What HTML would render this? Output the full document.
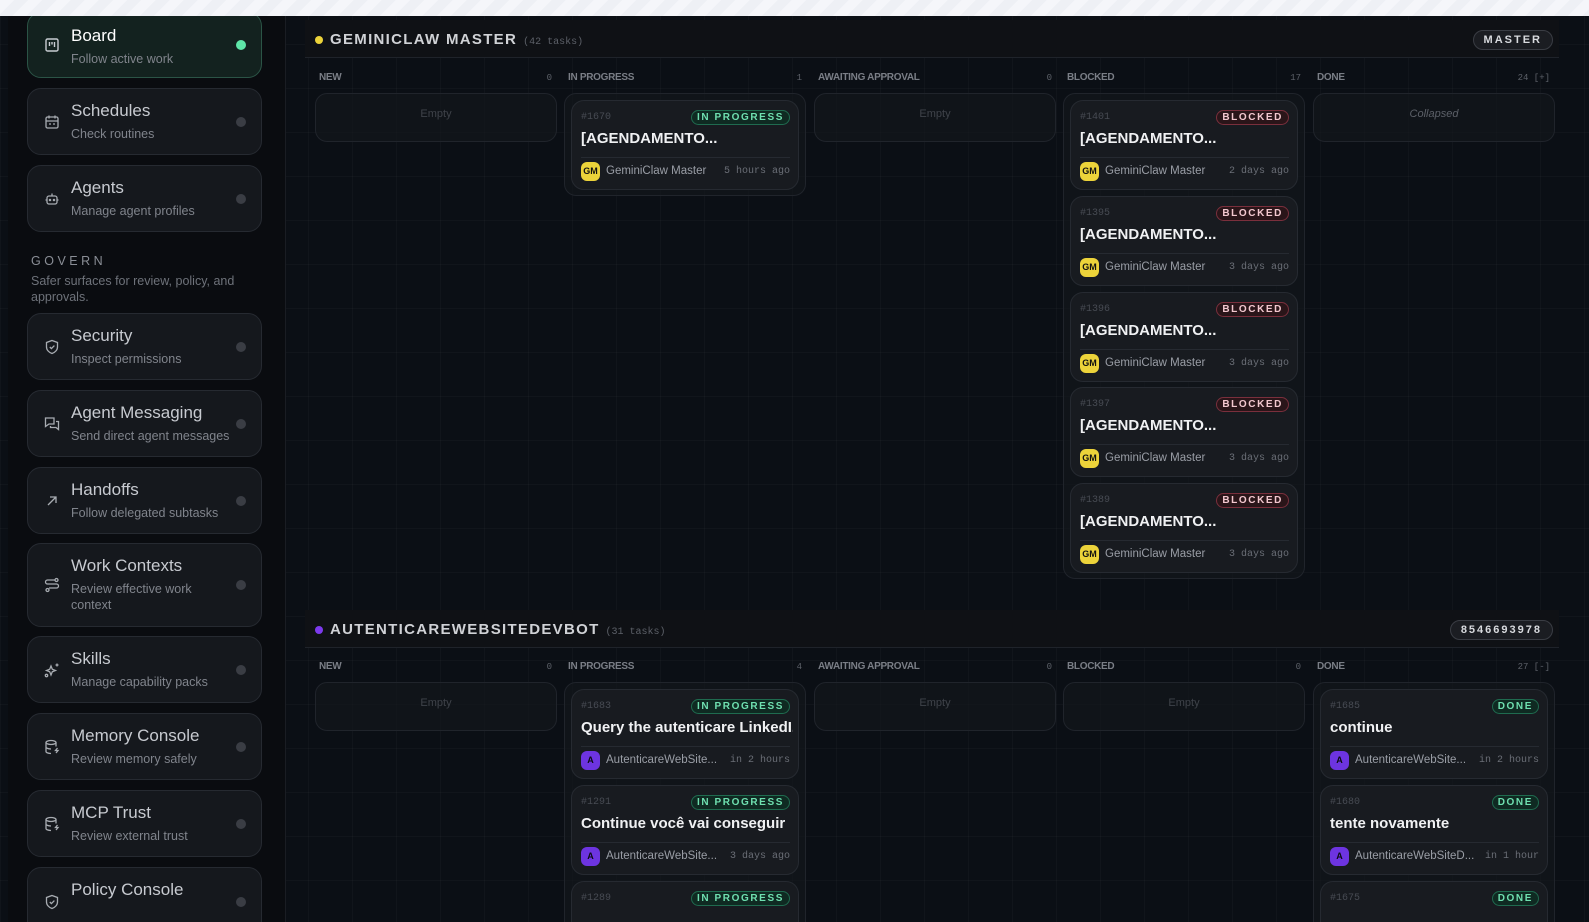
<!DOCTYPE html>
<html><head><meta charset="utf-8"><style>
*{box-sizing:border-box;margin:0;padding:0}
html,body{width:1589px;height:922px;overflow:hidden}
body{background:#0b0f15;font-family:"Liberation Sans",sans-serif;}
#w{position:relative;width:1589px;height:922px;overflow:hidden;background:#0b0f15;
background-image:linear-gradient(rgba(255,255,255,0.025) 1px,transparent 1px),linear-gradient(90deg,rgba(255,255,255,0.025) 1px,transparent 1px);background-size:44px 44px;}
.top{position:absolute;left:0;top:0;width:1589px;height:16px;background:repeating-linear-gradient(135deg,#f5f6fa 0 10px,#eef0f5 10px 20px);z-index:5}
.side{position:absolute;left:8px;top:0;width:278px;height:922px;background:#0a0c10;border-right:1px solid #1a1d23}
.nav{position:absolute;left:27px;width:235px;border:1px solid #262a31;border-radius:14px;background:#15181d}
.nav.act{background:#13221f;border-color:#2b5446}
.nav .ic{position:absolute;left:16px;top:50%;margin-top:-8px;width:16px;height:16px}
.nav .t{position:absolute;left:43px;top:12px;font-size:17px;color:#c7cad0}
.nav.act .t{color:#fff}
.nav .s{position:absolute;left:43px;top:37px;font-size:12.5px;color:#80848c;line-height:16px;width:165px}
.nav .d{position:absolute;right:15px;top:50%;margin-top:-5px;width:10px;height:10px;border-radius:50%;background:#3a3d44}
.nav.act .d{background:#5ee6a8}
.gov{position:absolute;left:31px;top:254px;font-size:12.5px;letter-spacing:3.5px;color:#8a8e96}
.govs{position:absolute;left:31px;top:273px;font-size:12.5px;color:#6e727a;width:230px;line-height:16px}
.hdr{position:absolute;left:305px;width:1254px;height:38px;background:#0f1115;border-bottom:1px solid #1f232a}
.hdr .dot{position:absolute;left:10px;top:16px;width:8px;height:8px;border-radius:50%}
.hdr .n{position:absolute;left:25px;top:11px;font-size:15px;font-weight:bold;letter-spacing:1.3px;color:#d0d2d6}
.hdr .c{font-family:"Liberation Mono",monospace;font-size:10px;color:#5c6068;font-weight:normal;letter-spacing:0;margin-left:6px}
.hdr .p{position:absolute;right:6px;top:10px;height:20px;padding:0 10px;border:1px solid #3a3d44;border-radius:10px;background:#1b1d22;font-size:11px;font-weight:bold;letter-spacing:2px;color:#d8dade;line-height:18px}
.ch{position:absolute;font-size:10px;font-weight:bold;color:#7a7e86;letter-spacing:-0.3px}
.cn{position:absolute;font-family:"Liberation Mono",monospace;font-size:9px;color:#5c6068;text-align:right}
.col{position:absolute;width:242px;border:1px solid #20242b;border-radius:12px;background:rgba(20,23,28,0.6)}
.emp{position:absolute;width:100%;top:14px;text-align:center;font-size:11px;color:#3f434a}
.card{position:absolute;width:228px;height:90px;border:1px solid #262a31;border-radius:13px;background:#181b20}
.card .id{position:absolute;left:9px;top:11px;font-family:"Liberation Mono",monospace;font-size:10px;color:#474b53}
.card .b{position:absolute;right:8px;top:9px;height:15px;padding:0 5px;border-radius:8px;font-size:10px;font-weight:bold;letter-spacing:1.6px;line-height:13px}
.b.ip,.b.dn{border:1px solid #1f6b4f;background:#0f2a22;color:#6fe0b0}
.b.bl{border:1px solid #7a2f3c;background:#2a1519;color:#f3c8cf}
.card .tt{position:absolute;left:9px;top:29px;font-size:15px;font-weight:bold;color:#f0f1f3;white-space:nowrap;overflow:hidden;width:212px}
.card .sep{position:absolute;left:9px;right:8px;top:56px;border-top:1px solid #262a31}
.card .av{position:absolute;left:9px;top:61px;width:19px;height:19px;border-radius:6px;font-size:9px;font-weight:bold;text-align:center;line-height:19px;color:#111}
.av.gm{background:#ecd33a}.av.a{background:#6d34e0;color:#0b0b10}
.card .an{position:absolute;left:34px;top:64px;font-size:11.5px;color:#9a9ea6;white-space:nowrap}
.card .tm{position:absolute;right:8px;top:65px;font-family:"Liberation Mono",monospace;font-size:10px;color:#6a6e76}
</style></head><body><div id="w">
<div class="top"></div>
<div class="side"></div>

<div class="nav act" style="top:12px;height:66px"><svg class="ic" viewBox="0 0 16 16" fill="none" stroke="#c8ccd2" stroke-width="1.4"><rect x="2" y="2" width="12" height="12" rx="1.5"/><path d="M5.5 5v4M8 5v2.5M10.5 5v5"/></svg><div class="t" style="top:13px">Board</div><div class="s" style="top:38px">Follow active work</div><div class="d"></div></div>
<div class="nav" style="top:88px;height:67px"><svg class="ic" viewBox="0 0 16 16" fill="none" stroke="#a8acb2" stroke-width="1.3"><rect x="2" y="3" width="12" height="11" rx="1.5"/><path d="M5 1.5v3M11 1.5v3M2 7h12M5 10h2M9 10h2"/></svg><div class="t">Schedules</div><div class="s">Check routines</div><div class="d"></div></div>
<div class="nav" style="top:165px;height:67px"><svg class="ic" viewBox="0 0 16 16" fill="none" stroke="#a8acb2" stroke-width="1.3"><rect x="3" y="5" width="10" height="8" rx="2"/><path d="M8 2.5v2.5M1.5 9h1.5M13 9h1.5"/><circle cx="6" cy="9" r=".6"/><circle cx="10" cy="9" r=".6"/></svg><div class="t">Agents</div><div class="s">Manage agent profiles</div><div class="d"></div></div>
<div class="gov">GOVERN</div>
<div class="govs">Safer surfaces for review, policy, and approvals.</div>
<div class="nav" style="top:313px;height:67px"><svg class="ic" viewBox="0 0 16 16" fill="none" stroke="#a8acb2" stroke-width="1.3"><path d="M8 1.5l5.5 2v4.5c0 3-2.5 5.5-5.5 6.5C5 13.5 2.5 11 2.5 8V3.5z"/><path d="M5.8 8l1.6 1.6 3-3"/></svg><div class="t">Security</div><div class="s">Inspect permissions</div><div class="d"></div></div>
<div class="nav" style="top:390px;height:67px"><svg class="ic" viewBox="0 0 16 16" fill="none" stroke="#a8acb2" stroke-width="1.3"><path d="M1.5 2h8.5v6H5l-3.5 2.5z"/><path d="M12 5.5h2.5v8L12 11.5H6.5V10"/></svg><div class="t">Agent Messaging</div><div class="s" style="width:190px">Send direct agent messages</div><div class="d"></div></div>
<div class="nav" style="top:467px;height:67px"><svg class="ic" viewBox="0 0 16 16" fill="none" stroke="#a8acb2" stroke-width="1.3"><path d="M4 12L12 4M6 4h6v6"/></svg><div class="t">Handoffs</div><div class="s">Follow delegated subtasks</div><div class="d"></div></div>
<div class="nav" style="top:543px;height:84px"><svg class="ic" viewBox="0 0 16 16" fill="none" stroke="#a8acb2" stroke-width="1.3"><circle cx="12.5" cy="3" r="1.5"/><circle cx="3.5" cy="13" r="1.5"/><path d="M11 3H3.5a2 2 0 000 4h9a2 2 0 010 4H5"/></svg><div class="t">Work Contexts</div><div class="s" style="width:140px">Review effective work context</div><div class="d"></div></div>
<div class="nav" style="top:636px;height:67px"><svg class="ic" viewBox="0 0 16 16" fill="none" stroke="#a8acb2" stroke-width="1.3"><path d="M7 4l1.3 3.2L11.5 8.5 8.3 9.8 7 13 5.7 9.8 2.5 8.5 5.7 7.2z"/><path d="M13 1.5v3M11.5 3h3"/><circle cx="2.5" cy="13.5" r="1.2"/></svg><div class="t">Skills</div><div class="s">Manage capability packs</div><div class="d"></div></div>
<div class="nav" style="top:713px;height:67px"><svg class="ic" viewBox="0 0 16 16" fill="none" stroke="#a8acb2" stroke-width="1.3"><ellipse cx="7" cy="3.5" rx="5" ry="2"/><path d="M2 3.5v9c0 1.1 2.2 2 5 2M12 3.5v4M2 8c0 1.1 2.2 2 5 2M13.5 9l-2 2.5h2.5l-2 2.5"/></svg><div class="t">Memory Console</div><div class="s">Review memory safely</div><div class="d"></div></div>
<div class="nav" style="top:790px;height:67px"><svg class="ic" viewBox="0 0 16 16" fill="none" stroke="#a8acb2" stroke-width="1.3"><ellipse cx="7" cy="3.5" rx="5" ry="2"/><path d="M2 3.5v9c0 1.1 2.2 2 5 2M12 3.5v4M2 8c0 1.1 2.2 2 5 2M13.5 9l-2 2.5h2.5l-2 2.5"/></svg><div class="t">MCP Trust</div><div class="s">Review external trust</div><div class="d"></div></div>
<div class="nav" style="top:867px;height:80px"><svg class="ic" style="top:26px;margin-top:0" viewBox="0 0 16 16" fill="none" stroke="#a8acb2" stroke-width="1.3"><path d="M8 1.5l5.5 2v4.5c0 3-2.5 5.5-5.5 6.5C5 13.5 2.5 11 2.5 8V3.5z"/><path d="M5.8 8l1.6 1.6 3-3"/></svg><div class="t">Policy Console</div><div class="d" style="top:29px;margin-top:0"></div></div>

<div class="hdr" style="top:20px"><div class="dot" style="background:#ecd33a"></div><div class="n">GEMINICLAW MASTER<span class="c">(42 tasks)</span></div><div class="p">MASTER</div></div>
<div class="ch" style="left:319px;top:72px">NEW</div><div class="cn" style="left:500px;width:52px;top:73px">0</div>
<div class="ch" style="left:568px;top:72px">IN PROGRESS</div><div class="cn" style="left:750px;width:52px;top:73px">1</div>
<div class="ch" style="left:818px;top:72px">AWAITING APPROVAL</div><div class="cn" style="left:1000px;width:52px;top:73px">0</div>
<div class="ch" style="left:1067px;top:72px">BLOCKED</div><div class="cn" style="left:1249px;width:52px;top:73px">17</div>
<div class="ch" style="left:1317px;top:72px">DONE</div><div class="cn" style="left:1470px;width:80px;top:73px">24 [+]</div>

<div class="col" style="left:315px;top:93px;height:49px"><div class="emp">Empty</div></div>
<div class="col" style="left:564px;top:93px;height:103px"></div>
<div class="col" style="left:814px;top:93px;height:49px"><div class="emp">Empty</div></div>
<div class="col" style="left:1063px;top:93px;height:486px"></div>
<div class="col" style="left:1313px;top:93px;height:49px"><div class="emp" style="font-style:italic;color:#5c6068">Collapsed</div></div>

<div class="card" style="left:571px;top:100px"><div class="id">#1670</div><div class="b ip">IN PROGRESS</div><div class="tt">[AGENDAMENTO...</div><div class="sep"></div><div class="av gm">GM</div><div class="an">GeminiClaw Master</div><div class="tm">5 hours ago</div></div>

<div class="card" style="left:1070px;top:100px"><div class="id">#1401</div><div class="b bl">BLOCKED</div><div class="tt">[AGENDAMENTO...</div><div class="sep"></div><div class="av gm">GM</div><div class="an">GeminiClaw Master</div><div class="tm">2 days ago</div></div>
<div class="card" style="left:1070px;top:196px"><div class="id">#1395</div><div class="b bl">BLOCKED</div><div class="tt">[AGENDAMENTO...</div><div class="sep"></div><div class="av gm">GM</div><div class="an">GeminiClaw Master</div><div class="tm">3 days ago</div></div>
<div class="card" style="left:1070px;top:292px"><div class="id">#1396</div><div class="b bl">BLOCKED</div><div class="tt">[AGENDAMENTO...</div><div class="sep"></div><div class="av gm">GM</div><div class="an">GeminiClaw Master</div><div class="tm">3 days ago</div></div>
<div class="card" style="left:1070px;top:387px"><div class="id">#1397</div><div class="b bl">BLOCKED</div><div class="tt">[AGENDAMENTO...</div><div class="sep"></div><div class="av gm">GM</div><div class="an">GeminiClaw Master</div><div class="tm">3 days ago</div></div>
<div class="card" style="left:1070px;top:483px"><div class="id">#1389</div><div class="b bl">BLOCKED</div><div class="tt">[AGENDAMENTO...</div><div class="sep"></div><div class="av gm">GM</div><div class="an">GeminiClaw Master</div><div class="tm">3 days ago</div></div>

<div class="hdr" style="top:610px"><div class="dot" style="background:#7c3aed"></div><div class="n">AUTENTICAREWEBSITEDEVBOT<span class="c">(31 tasks)</span></div><div class="p">8546693978</div></div>
<div class="ch" style="left:319px;top:661px">NEW</div><div class="cn" style="left:500px;width:52px;top:662px">0</div>
<div class="ch" style="left:568px;top:661px">IN PROGRESS</div><div class="cn" style="left:750px;width:52px;top:662px">4</div>
<div class="ch" style="left:818px;top:661px">AWAITING APPROVAL</div><div class="cn" style="left:1000px;width:52px;top:662px">0</div>
<div class="ch" style="left:1067px;top:661px">BLOCKED</div><div class="cn" style="left:1249px;width:52px;top:662px">0</div>
<div class="ch" style="left:1317px;top:661px">DONE</div><div class="cn" style="left:1470px;width:80px;top:662px">27 [-]</div>

<div class="col" style="left:315px;top:682px;height:49px"><div class="emp">Empty</div></div>
<div class="col" style="left:564px;top:682px;height:300px"></div>
<div class="col" style="left:814px;top:682px;height:49px"><div class="emp">Empty</div></div>
<div class="col" style="left:1063px;top:682px;height:49px"><div class="emp">Empty</div></div>
<div class="col" style="left:1313px;top:682px;height:300px"></div>

<div class="card" style="left:571px;top:689px"><div class="id">#1683</div><div class="b ip">IN PROGRESS</div><div class="tt">Query the autenticare LinkedI...</div><div class="sep"></div><div class="av a">A</div><div class="an">AutenticareWebSite...</div><div class="tm">in 2 hours</div></div>
<div class="card" style="left:571px;top:785px"><div class="id">#1291</div><div class="b ip">IN PROGRESS</div><div class="tt">Continue você vai conseguir</div><div class="sep"></div><div class="av a">A</div><div class="an">AutenticareWebSite...</div><div class="tm">3 days ago</div></div>
<div class="card" style="left:571px;top:881px"><div class="id">#1289</div><div class="b ip">IN PROGRESS</div></div>

<div class="card" style="left:1320px;top:689px"><div class="id">#1685</div><div class="b dn">DONE</div><div class="tt">continue</div><div class="sep"></div><div class="av a">A</div><div class="an">AutenticareWebSite...</div><div class="tm">in 2 hours</div></div>
<div class="card" style="left:1320px;top:785px"><div class="id">#1680</div><div class="b dn">DONE</div><div class="tt">tente novamente</div><div class="sep"></div><div class="av a">A</div><div class="an">AutenticareWebSiteD...</div><div class="tm">in 1 hour</div></div>
<div class="card" style="left:1320px;top:881px"><div class="id">#1675</div><div class="b dn">DONE</div></div>
</div></body></html>
